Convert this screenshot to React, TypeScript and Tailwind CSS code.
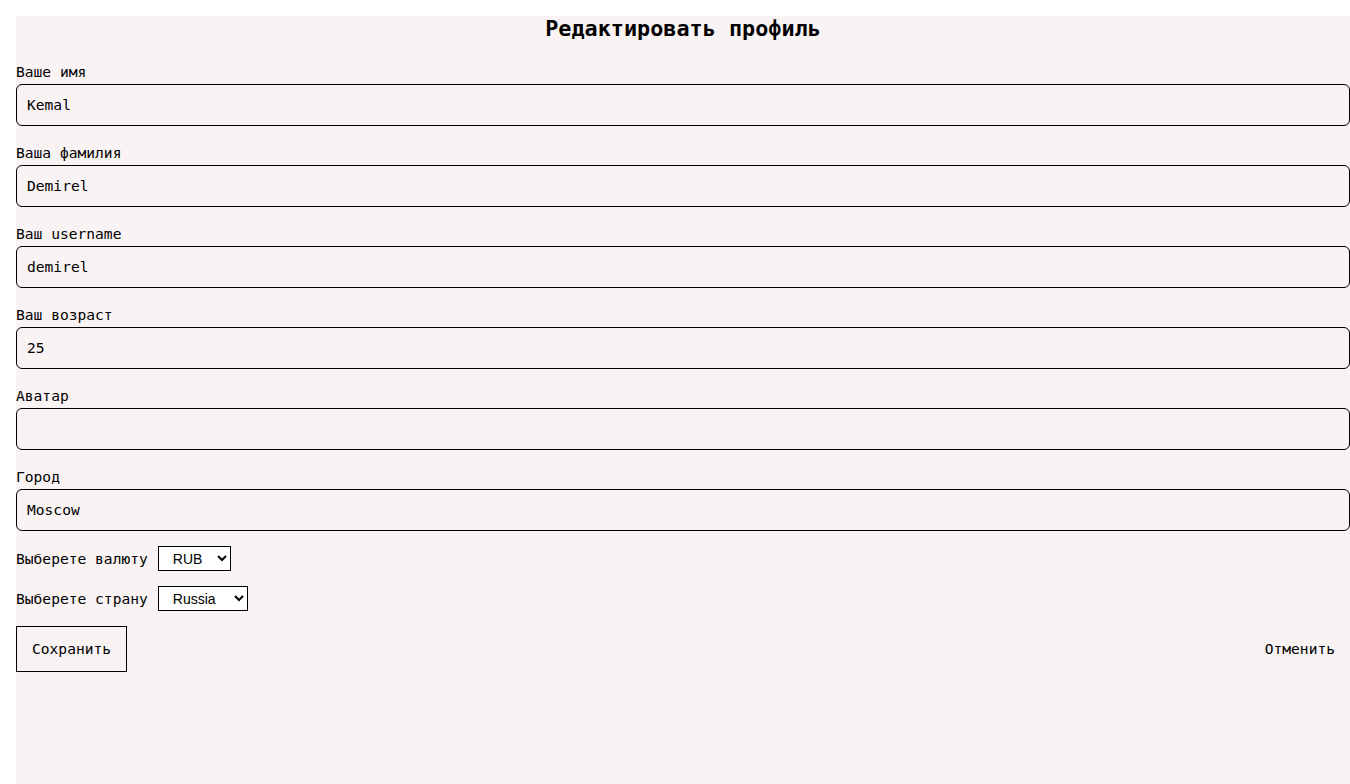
import { useState } from "react";

const FIELDS = [
  { label: "Ваше имя", value: "Kemal" },
  { label: "Ваша фамилия", value: "Demirel" },
  { label: "Ваш username", value: "demirel" },
  { label: "Ваш возраст", value: "25" },
  { label: "Аватар", value: "" },
  { label: "Город", value: "Moscow" },
];

export default function App() {
  const [values, setValues] = useState(FIELDS.map((f) => f.value));
  const [currency, setCurrency] = useState("RUB");
  const [country, setCountry] = useState("Russia");

  return (
    <div className="bg-white min-h-screen pt-4 pl-4 font-['DejaVu_Sans_Mono',monospace] text-[14.6px] text-black">
      <main className="bg-[#f9f3f3] min-h-[768px] w-full">
        {/* Title */}
        <h1 className="text-center font-bold text-[21.8px] leading-[26px]">
          Редактировать профиль
        </h1>

        {/* Text fields */}
        <div className="mt-[22px] flex flex-col">
          {FIELDS.map((field, i) => (
            <div key={field.label} className="flex flex-col pb-[19px] last:pb-[15px]">
              <label className="leading-[16px]">{field.label}</label>
              <input
                value={values[i]}
                onChange={(e) =>
                  setValues(values.map((v, j) => (j === i ? e.target.value : v)))
                }
                className="mt-[4px] h-[42px] w-full rounded-[6px] border border-black bg-transparent px-[10px] pb-[2px] outline-none"
              />
            </div>
          ))}
        </div>

        {/* Selects */}
        <div className="flex flex-col gap-[15px]">
          <div className="flex items-center gap-[10px]">
            <span className="leading-[17px]">Выберете валюту</span>
            <select
              value={currency}
              onChange={(e) => setCurrency(e.target.value)}
              className="h-[25px] w-[73px] border border-black bg-white pl-[10px] font-['Liberation_Sans',Arial,sans-serif] text-[14px]"
            >
              <option>RUB</option>
              <option>USD</option>
              <option>EUR</option>
            </select>
          </div>
          <div className="flex items-center gap-[10px]">
            <span className="leading-[17px]">Выберете страну</span>
            <select
              value={country}
              onChange={(e) => setCountry(e.target.value)}
              className="h-[25px] w-[90px] border border-black bg-white pl-[10px] font-['Liberation_Sans',Arial,sans-serif] text-[14px]"
            >
              <option>Russia</option>
              <option>Turkey</option>
            </select>
          </div>

          {/* Actions */}
          <div className="flex items-center justify-between">
            <button className="h-[46px] border border-black px-[15px]">Сохранить</button>
            <button className="h-[46px] px-[15px]">Отменить</button>
          </div>
        </div>
      </main>
    </div>
  );
}
